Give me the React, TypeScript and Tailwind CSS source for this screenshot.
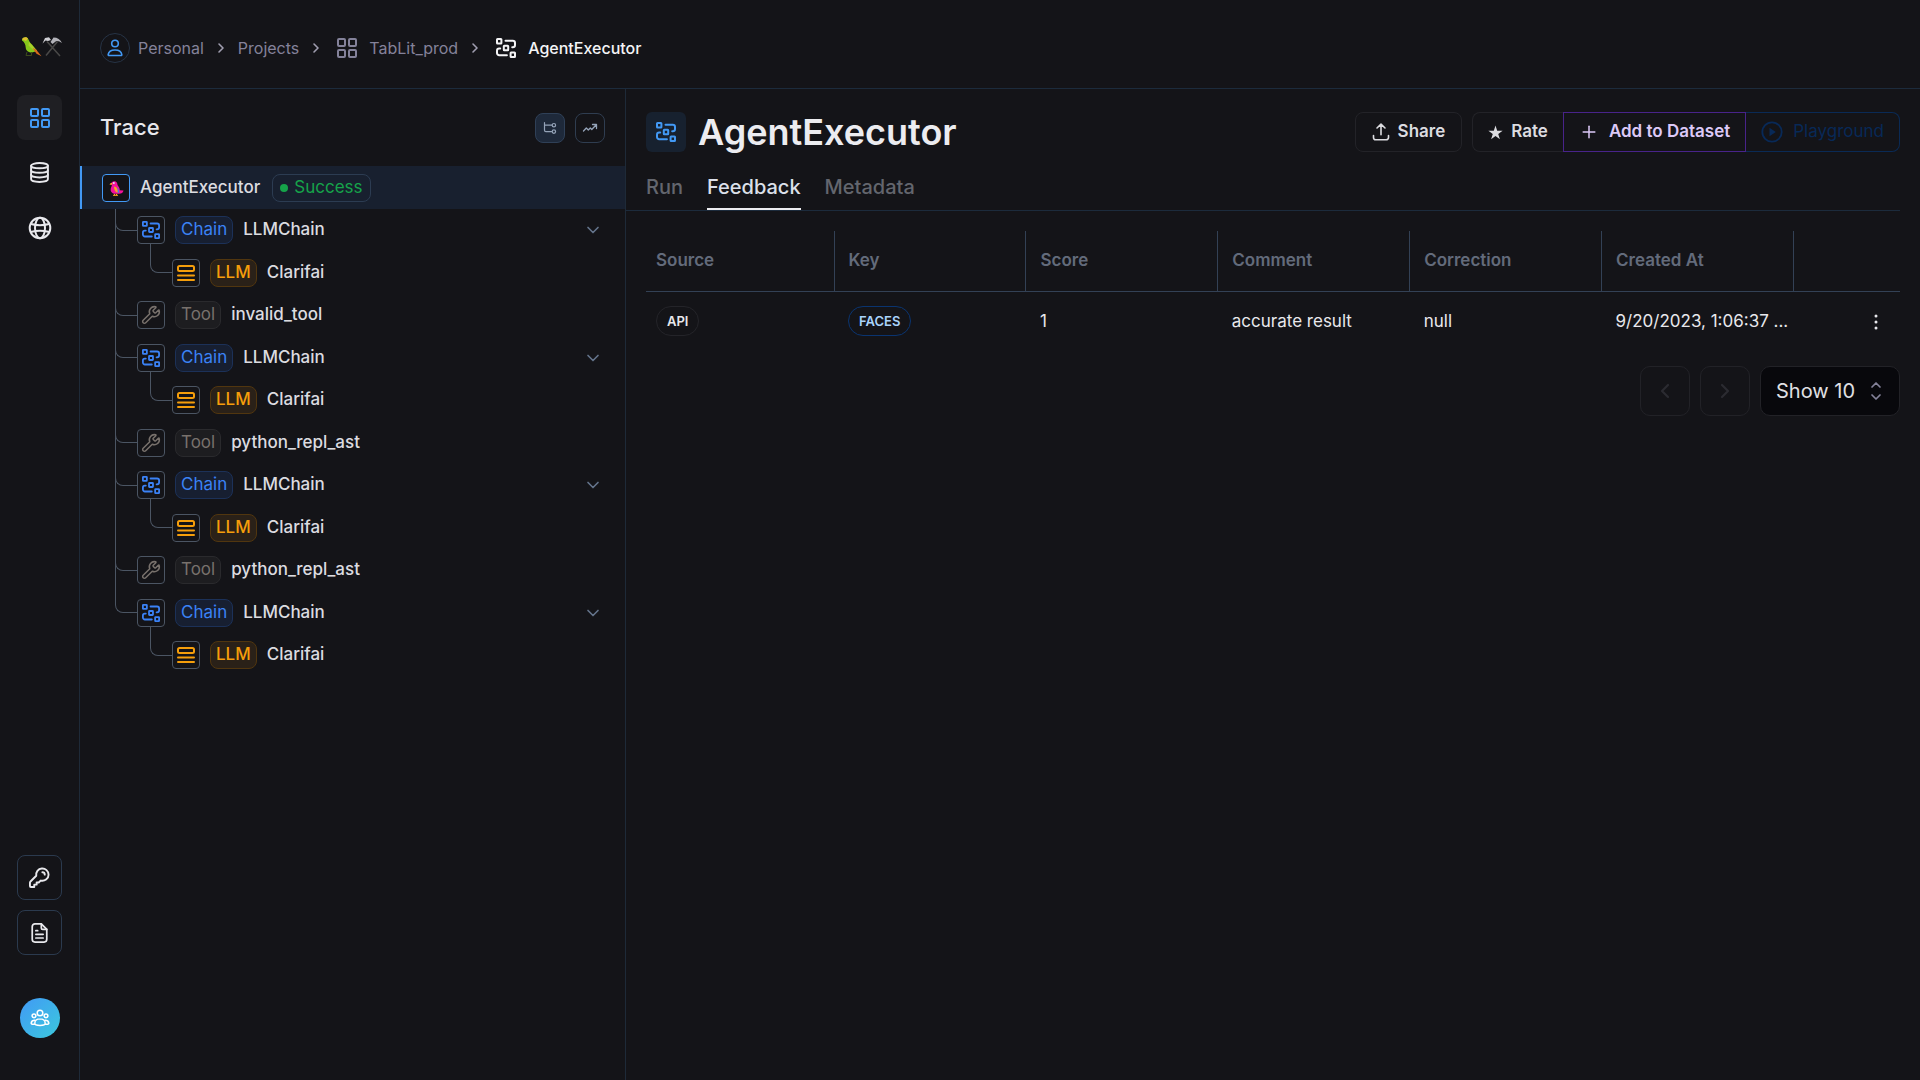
import { Fragment, type ReactNode } from "react";
import {
  ChevronDown,
  ChevronLeft,
  ChevronRight,
  ChevronUp,
  Plus,
  Wrench,
} from "lucide-react";

type IconProps = { className?: string };

function FlowIcon({ className }: IconProps) {
  return (
    <svg viewBox="0 0 20 20" fill="none" stroke="currentColor" strokeWidth="2" strokeLinecap="round" strokeLinejoin="round" className={className} aria-hidden="true">
      <rect x="1" y="1" width="4.4" height="4.4" rx="0.5" />
      <rect x="7.8" y="7.8" width="4.4" height="4.4" rx="0.5" />
      <rect x="14.6" y="14.6" width="4.4" height="4.4" rx="0.5" />
      <path d="M9.5 2.8h7.3A2.2 2.2 0 0 1 19 5v2a2.2 2.2 0 0 1-2.2 2.2h-.6" />
      <path d="M10.9 17.2H3.2A2.2 2.2 0 0 1 1 15v-2.2a2.2 2.2 0 0 1 2.2-2.2h1" />
    </svg>
  );
}

function GridIcon({ className }: IconProps) {
  return (
    <svg viewBox="0 0 20 20" fill="none" stroke="currentColor" strokeWidth="2" strokeLinejoin="round" className={className} aria-hidden="true">
      <rect x="1" y="1" width="7" height="7" rx="1" />
      <rect x="12" y="1" width="7" height="7" rx="1" />
      <rect x="1" y="12" width="7" height="7" rx="1" />
      <rect x="12" y="12" width="7" height="7" rx="1" />
    </svg>
  );
}

function LayersIcon({ className }: IconProps) {
  return (
    <svg viewBox="0 0 18 18" fill="none" stroke="currentColor" strokeWidth="2" strokeLinecap="round" className={className} aria-hidden="true">
      <rect x="1" y="2" width="16" height="5" rx="1.5" />
      <path d="M1 11.500h16M1 16h16" />
    </svg>
  );
}

function DatabaseIcon({ className }: IconProps) {
  return (
    <svg viewBox="0 0 20 20" fill="none" stroke="currentColor" strokeWidth="1.8" strokeLinecap="round" className={className} aria-hidden="true">
      <ellipse cx="10" cy="3.5" rx="8" ry="2.5" />
      <path d="M2 3.5v13C2 17.900 5.600 19 10 19s8-1.100 8-2.500v-13" />
      <path d="M2 7.800c0 1.400 3.600 2.500 8 2.500s8-1.100 8-2.500M2 12.200c0 1.400 3.600 2.500 8 2.500s8-1.100 8-2.500" />
    </svg>
  );
}

function GlobeIcon({ className }: IconProps) {
  return (
    <svg viewBox="0 0 24 24" fill="none" stroke="currentColor" strokeWidth="2" className={className} aria-hidden="true">
      <circle cx="12" cy="12" r="10.3" />
      <ellipse cx="12" cy="12" rx="5" ry="10.3" />
      <path d="M2.800 8c5 1.300 13.400 1.300 18.400 0M2.800 16c5-1.300 13.400-1.300 18.400 0" />
    </svg>
  );
}

function UserIcon({ className }: IconProps) {
  return (
    <svg viewBox="0 0 18 18" fill="none" stroke="currentColor" strokeWidth="1.6" strokeLinejoin="round" className={className} aria-hidden="true">
      <circle cx="9" cy="4.5" r="3.3" />
      <path d="M3 16.500c-.6 0-.9-.4-.8-1C2.600 12.800 5 11 9 11s6.400 1.800 6.800 4.500c.1.600-.2 1-.8 1z" />
    </svg>
  );
}

function KeyIcon({ className }: IconProps) {
  return (
    <svg viewBox="0 0 22 22" fill="none" stroke="currentColor" strokeWidth="2" strokeLinecap="round" strokeLinejoin="round" className={className} aria-hidden="true">
      <path d="M20.500 8a6.500 6.500 0 1 0-12.900 1.200L1.600 15.200c-.4.400-.6.900-.6 1.400V20c0 .6.400 1 1 1h3.500v-2.500H8v-2.300h2.200l2-2A6.500 6.500 0 0 0 20.500 8z" />
      <path d="M14 5.500c1.400 0 2.500 1.100 2.500 2.500" />
    </svg>
  );
}

function DocumentIcon({ className }: IconProps) {
  return (
    <svg viewBox="0 0 18 22" fill="none" stroke="currentColor" strokeWidth="1.9" strokeLinecap="round" strokeLinejoin="round" className={className} aria-hidden="true">
      <path d="M11 1H4a3 3 0 0 0-3 3v14a3 3 0 0 0 3 3h10a3 3 0 0 0 3-3V7z" />
      <path d="M11 1v4.500c0 .8.700 1.500 1.500 1.500H17M5 8.500h2M5 12.500h8M5 16.500h8" />
    </svg>
  );
}

function TeamIcon({ className }: IconProps) {
  return (
    <svg viewBox="0 0 20 20" fill="none" stroke="currentColor" strokeWidth="1.5" strokeLinecap="round" strokeLinejoin="round" className={className} aria-hidden="true">
      <circle cx="10" cy="5" r="2.8" />
      <circle cx="4" cy="7.8" r="1.9" />
      <circle cx="16" cy="7.8" r="1.9" />
      <path d="M10 10.800c-3.200 0-5.200 2-5.200 4.500 0 1.300 2 2.200 5.200 2.200s5.200-.9 5.200-2.200c0-2.500-2-4.500-5.200-4.500z" />
      <path d="M4.500 16.200H2.300c-.8 0-1.200-.5-1.100-1.200.3-1.600 1.600-2.700 3.600-2.700M15.500 16.200h2.200c.8 0 1.200-.5 1.100-1.200-.3-1.600-1.600-2.700-3.600-2.700" />
    </svg>
  );
}

function TreeIcon({ className }: IconProps) {
  return (
    <svg viewBox="0 0 14 14" fill="none" stroke="currentColor" strokeWidth="1.2" strokeLinecap="round" className={className} aria-hidden="true">
      <path d="M1.500 1.500v7.700c0 .9.500 1.400 1.400 1.400h5.800M1.500 4.200h7.200" />
      <circle cx="10.9" cy="4.2" r="1.7" />
      <circle cx="10.9" cy="10.6" r="1.7" />
    </svg>
  );
}

function TrendIcon({ className }: IconProps) {
  return (
    <svg viewBox="0 0 16 16" fill="none" stroke="currentColor" strokeWidth="1.3" strokeLinecap="round" strokeLinejoin="round" className={className} aria-hidden="true">
      <path d="M1.500 11l2.800-3 2 2 2-2 1.500 1.500L14.500 4.500M10.500 4.500h4v4" />
    </svg>
  );
}

function ShareIcon({ className }: IconProps) {
  return (
    <svg viewBox="0 0 18 18" fill="none" stroke="currentColor" strokeWidth="1.6" strokeLinecap="round" strokeLinejoin="round" className={className} aria-hidden="true">
      <path d="M5 5l4-3.800L13 5M9 1.500v10.300M1.500 12.500v2A2.300 2.300 0 0 0 3.800 16.800h10.400a2.300 2.300 0 0 0 2.300-2.300v-2" />
    </svg>
  );
}

function StarIcon({ className }: IconProps) {
  return (
    <svg viewBox="0 0 16 16" fill="currentColor" className={className} aria-hidden="true">
      <path d="M8 .5l1.800 5.600h5.800l-4.700 3.400 1.800 5.700L8 11.700l-4.700 3.500 1.800-5.700L.4 6.100h5.800z" />
    </svg>
  );
}

function PlayIcon({ className }: IconProps) {
  return (
    <svg viewBox="0 0 22 22" className={className} aria-hidden="true">
      <circle cx="11" cy="11" r="9.7" fill="none" stroke="currentColor" strokeWidth="1.8" />
      <path d="M8.500 6.800v8.400l6.300-4.200z" fill="currentColor" />
    </svg>
  );
}

function DotsIcon({ className }: IconProps) {
  return (
    <svg viewBox="0 0 4 16" fill="currentColor" className={className} aria-hidden="true">
      <circle cx="2" cy="2" r="1.5" />
      <circle cx="2" cy="8" r="1.5" />
      <circle cx="2" cy="14" r="1.5" />
    </svg>
  );
}

function BrandMark({ className }: IconProps) {
  return (
    <svg viewBox="0 0 42 22" className={className} aria-hidden="true">
      <path d="M1 3.500C2 1 6 .3 7.500 3.500c.8 2 1.300 3 3.500 5l5 6.500-5 1.500c-3.500 0-6-1.500-6.300-5C4.500 8.500 3.500 6 1 4.500z" fill="#86c81a" />
      <path d="M1 3.300C2 1 5.500.5 7 2.500L5 5z" fill="#e0bd30" />
      <path d="M8 6l8 8.500-2 1-6.500-6z" fill="#a9d12b" />
      <path d="M11.500 12l3.500 1.500 5.500 6.800-5-2.500z" fill="#d9681c" />
      <path d="M6 16l-1 3.500h5.500V16" fill="none" stroke="#3c4a1d" />
      <path d="M26 5.500l13 14.500M36.500 5.500L25 19.500" stroke="#4a4948" strokeWidth="1.5" />
      <path d="M21.500 7.500L24 2l4-.8L30 4l-3 1-2.500-.5z" fill="#d0d0d5" />
      <path d="M32.500 1.500c4 0 7 2 8.500 5.500-2.500-2-4.500-2.500-6-1.800L31.500 8l-2-2z" fill="#b2b2b8" />
    </svg>
  );
}

function ParrotIcon({ className }: IconProps) {
  return (
    <svg viewBox="0 0 16 16" className={className} aria-hidden="true">
      <path d="M3 4C3 1 8 0 9 2.800c.4 1 .3 2 1 3 1.300 1.700 1.800 3 1.800 4.500l3.700.2c-.5 2.300-2 3.300-4.300 3.300L6 13.800C2.500 12.700 2 9.500 3.300 7 4 5.700 4.200 5 3 4z" fill="#f4119c" />
      <path d="M1.500 4.500C2 3 3.500 2.500 4.500 3.300L3.500 5z" fill="#f7a823" />
      <circle cx="5.8" cy="2.900" r="1" fill="#dbe7f5" />
      <path d="M6 6.500c2.500 0 4.200 3 3.700 6.300C7.300 12 6 10 6 6.500z" fill="#f7a823" />
      <path d="M9 7c1.500 1.500 2.400 3.500 2.200 6l-1.600-.5C10 10.500 9.800 9 9 7z" fill="#3e7fe8" />
      <path d="M6.500 14v1.300M8.500 14v1.300M5 15.300h5" stroke="#f7a823" />
    </svg>
  );
}

type Kind = "Chain" | "LLM" | "Tool";
type Run = { kind: Kind; name: string; last?: boolean };

const runs: Run[] = [
  { kind: "Chain", name: "LLMChain" },
  { kind: "LLM", name: "Clarifai" },
  { kind: "Tool", name: "invalid_tool" },
  { kind: "Chain", name: "LLMChain" },
  { kind: "LLM", name: "Clarifai" },
  { kind: "Tool", name: "python_repl_ast" },
  { kind: "Chain", name: "LLMChain" },
  { kind: "LLM", name: "Clarifai" },
  { kind: "Tool", name: "python_repl_ast" },
  { kind: "Chain", name: "LLMChain", last: true },
  { kind: "LLM", name: "Clarifai", last: true },
];

const kindIcon: Record<Kind, ReactNode> = {
  Chain: <FlowIcon className="size-[18px] text-[#3b82f6]" />,
  LLM: <LayersIcon className="size-[18px] text-[#f59e0b]" />,
  Tool: <Wrench className="size-5 text-[#78716c]" strokeWidth={1.8} />,
};

const kindBadge: Record<Kind, string> = {
  Chain: "border-[#1c3158] bg-[#171f31] text-[#3b82f6]",
  LLM: "border-[#51360f] bg-[#2a2118] text-[#f59e0b]",
  Tool: "border-[#2a2a2d] bg-[#1d1d20] text-[#78716c]",
};

function TreeRow({ run, tall }: { run: Run; tall: boolean }) {
  const nested = run.kind === "LLM";
  return (
    <li className={`relative flex items-center pr-5 ${tall ? "h-[43px]" : "h-[42px]"} ${nested ? "pl-[92px]" : "pl-[57px]"}`}>
      {!run.last && <span className="absolute left-[35px] top-0 h-full border-l border-[#4b5563]" />}
      {nested ? (
        <span className="absolute -top-2 left-[70px] h-[30px] w-[22px] rounded-bl-lg border-b border-l border-[#4b5563]" />
      ) : (
        <span className="absolute left-[35px] top-0 h-[22px] w-[22px] rounded-bl-lg border-b border-l border-[#4b5563]" />
      )}
      <span className="flex size-7 items-center justify-center rounded border border-[#4b5563] bg-[#141418]">{kindIcon[run.kind]}</span>
      <span className={`ml-2.5 flex h-7 items-center rounded-lg border px-[5px] text-[17px] ${kindBadge[run.kind]} ${run.kind === "LLM" ? "font-medium" : ""}`}>
        {run.kind}
      </span>
      <a href="#run" className="ml-2.5 text-[17px] font-medium text-[#dcdce0]">{run.name}</a>
      {run.kind === "Chain" && (
        <button type="button" aria-label="Collapse" className="ml-auto flex size-6 items-center justify-center text-[#64748b]">
          <ChevronDown className="size-5" strokeWidth={2} />
        </button>
      )}
    </li>
  );
}

const columns = ["Source", "Key", "Score", "Comment", "Correction", "Created At"];

function Crumb({ icon, label, current }: { icon?: ReactNode; label: string; current?: boolean }) {
  return (
    <a href="#crumb" className={`flex items-center ${current ? "font-medium text-[#f4f4f6]" : "text-[#84829a]"}`}>
      {icon}
      {label}
    </a>
  );
}

export default function App() {
  const crumbs = [
    <Crumb
      key="personal"
      label="Personal"
      icon={
        <span className="mr-2 flex size-[30px] items-center justify-center rounded-full border border-[#263345] text-[#4299f5]">
          <UserIcon className="size-[18px]" />
        </span>
      }
    />,
    <Crumb key="projects" label="Projects" />,
    <Crumb key="tablit" label="TabLit_prod" icon={<GridIcon className="ml-1 mr-3 size-5" />} />,
    <Crumb key="agent" label="AgentExecutor" current icon={<FlowIcon className="ml-1 mr-3 size-5" />} />,
  ];

  return (
    <div className="flex min-h-screen bg-[#141418] font-['Inter',sans-serif] text-[#e8e8ec]">
      <nav aria-label="Main" className="flex w-20 shrink-0 flex-col items-center border-r border-[#1e2a38] pb-[42px] pt-9">
        <a href="#home" aria-label="Home" className="pl-1">
          <BrandMark className="h-[22px] w-[42px]" />
        </a>
        <div className="mt-[37px] flex flex-col gap-2.5">
          <a href="#projects" aria-label="Projects" className="flex size-[45px] items-center justify-center rounded-lg bg-[#1f1f23] text-[#4299f5]">
            <GridIcon className="size-5" />
          </a>
          <a href="#datasets" aria-label="Datasets" className="flex size-[45px] items-center justify-center">
            <DatabaseIcon className="size-[21px]" />
          </a>
          <a href="#hub" aria-label="Hub" className="flex size-[45px] items-center justify-center">
            <GlobeIcon className="size-6" />
          </a>
        </div>
        <div className="mt-auto flex flex-col gap-2.5">
          <a href="#keys" aria-label="API keys" className="flex size-[45px] items-center justify-center rounded-lg border border-[#2b3a4e]">
            <KeyIcon className="size-[21px]" />
          </a>
          <a href="#docs" aria-label="Documentation" className="flex size-[45px] items-center justify-center rounded-lg border border-[#2b3a4e]">
            <DocumentIcon className="h-5 w-[17px]" />
          </a>
        </div>
        <button type="button" aria-label="Organization" className="mt-[43px] flex size-10 items-center justify-center rounded-full bg-linear-to-br from-[#4299f5] to-[#3cc8dc] text-white">
          <TeamIcon className="size-5" />
        </button>
      </nav>

      <div className="flex min-w-0 flex-1 flex-col">
        <header className="flex h-[89px] items-center border-b border-[#1c2b3c] px-5 pt-2 text-base">
          {crumbs.map((crumb, i) => (
            <Fragment key={i}>
              {i > 0 && <ChevronRight className="mx-[9px] size-4 shrink-0 text-[#a09eb0]" strokeWidth={2.4} />}
              {crumb}
            </Fragment>
          ))}
        </header>

        <div className="flex flex-1">
          <section aria-label="Trace" className="w-[546px] shrink-0 border-r border-[#1e2a38]">
            <div className="flex h-[77px] items-center gap-2.5 px-5">
              <h2 className="mr-auto text-[22px] font-medium">Trace</h2>
              <button type="button" aria-label="Tree view" className="flex size-[30px] items-center justify-center rounded-lg border border-[#2f4057] bg-[#1e293a] text-[#94a3b8]">
                <TreeIcon className="size-3.5" />
              </button>
              <button type="button" aria-label="Latency view" className="flex size-[30px] items-center justify-center rounded-lg border border-[#2f3d50] text-[#94a3b8]">
                <TrendIcon className="size-4" />
              </button>
            </div>
            <ul>
              <li className="flex h-[43px] items-center border-l-2 border-[#4299f5] bg-[#18202f] pl-5">
                <span className="flex size-7 items-center justify-center rounded border border-[#4299f5] bg-[#141418]">
                  <ParrotIcon className="size-4" />
                </span>
                <a href="#run" className="ml-2.5 text-[17px] font-medium text-[#dcdce0]">AgentExecutor</a>
                <span className="ml-3 flex h-7 items-center rounded-lg border border-[#2c3c52] px-[7px] text-[17px] text-[#16a34a]">
                  <span className="mr-1.5 size-2 rounded-full bg-[#16a34a]" />
                  Success
                </span>
              </li>
              {runs.map((run, i) => (
                <TreeRow key={i} run={run} tall={i % 2 === 1} />
              ))}
            </ul>
          </section>

          <main className="min-w-0 flex-1 pr-5 pt-[23px]">
            <div className="flex items-center pl-5">
              <span className="flex size-10 items-center justify-center rounded-md bg-[#17212f] text-[#4299f5]">
                <FlowIcon className="size-5" />
              </span>
              <h1 className="ml-3 text-[36px] font-semibold leading-10 text-[#ececf0]">AgentExecutor</h1>
              <div className="ml-auto flex gap-2.5 text-[17px] font-semibold text-[#dcdce0]">
                <button type="button" className="flex h-10 items-center gap-2 rounded-lg border border-[#232328] px-4">
                  <ShareIcon className="size-[18px]" />
                  Share
                </button>
                <div className="flex">
                  <button type="button" className="flex h-10 items-center gap-2 rounded-l-lg border border-r-0 border-[#232328] px-[15px]">
                    <StarIcon className="size-[15px]" />
                    Rate
                  </button>
                  <button type="button" className="flex h-10 items-center gap-2.5 border border-[#48238a] px-[15px] text-[#dcc9f7]">
                    <Plus className="size-5" strokeWidth={1.8} />
                    Add to Dataset
                  </button>
                  <button type="button" disabled className="flex h-10 items-center gap-2.5 rounded-r-lg border border-l-0 border-[#0a2a55] px-[15px] font-normal text-[#082957]">
                    <PlayIcon className="size-[22px]" />
                    Playground
                  </button>
                </div>
              </div>
            </div>

            <div role="tablist" className="mt-3.5 flex gap-6 border-b border-[#1c2b3c] pl-5 text-xl font-medium text-[#63666e]">
              <button type="button" role="tab" aria-selected="false" className="h-11 border-b-2 border-transparent">Run</button>
              <button type="button" role="tab" aria-selected="true" className="h-11 border-b-2 border-[#ececf0] text-[#dce0ea]">Feedback</button>
              <button type="button" role="tab" aria-selected="false" className="h-11 border-b-2 border-transparent">Metadata</button>
            </div>

            <div className="pl-5 pt-5">
              <table className="w-full table-fixed border-collapse text-left text-[17px]">
                <colgroup>
                  <col className="w-[15%]" />
                  {columns.slice(1).map((c) => (
                    <col key={c} className="w-[15.3%]" />
                  ))}
                  <col />
                </colgroup>
                <thead>
                  <tr className="h-[60px] border-b border-[#334155] text-[#636b7b]">
                    {columns.map((c) => (
                      <th key={c} scope="col" className="border-r border-[#334155] pl-3.5 font-semibold first:pl-2.5">{c}</th>
                    ))}
                    <th scope="col" aria-label="Actions" />
                  </tr>
                </thead>
                <tbody>
                  <tr className="h-[60px]">
                    <td className="pl-2.5">
                      <span className="inline-flex h-[30px] items-center rounded-full border border-[#242429] px-2.5 align-middle text-[13px] font-semibold">API</span>
                    </td>
                    <td className="pl-3.5">
                      <span className="inline-flex h-[30px] items-center rounded-full border border-[#0a3470] px-2.5 align-middle text-[13px] font-semibold text-[#a9d3fb]">FACES</span>
                    </td>
                    <td className="pl-3.5">1</td>
                    <td className="pl-3.5">accurate result</td>
                    <td className="pl-3.5">null</td>
                    <td className="whitespace-nowrap pl-3.5">9/20/2023, 1:06:37 ...</td>
                    <td className="pr-3 text-right">
                      <button type="button" aria-label="Row actions" className="inline-flex size-6 items-center justify-center align-middle">
                        <DotsIcon className="h-4 w-1" />
                      </button>
                    </td>
                  </tr>
                </tbody>
              </table>

              <div className="mt-[15px] flex justify-end gap-2.5">
                <button type="button" disabled aria-label="Previous page" className="flex size-[50px] items-center justify-center rounded-[10px] border border-[#222227] text-[#2b2b31]">
                  <ChevronLeft className="size-6" strokeWidth={2.2} />
                </button>
                <button type="button" disabled aria-label="Next page" className="flex size-[50px] items-center justify-center rounded-[10px] border border-[#222227] text-[#2b2b31]">
                  <ChevronRight className="size-6" strokeWidth={2.2} />
                </button>
                <div className="relative">
                  <select aria-label="Rows per page" defaultValue="10" className="h-[50px] w-[140px] appearance-none rounded-[10px] border border-[#222227] bg-[#08080c] pl-[15px] text-xl text-[#e0e0e4]">
                    <option value="10">Show 10</option>
                    <option value="20">Show 20</option>
                  </select>
                  <span className="pointer-events-none absolute right-4 top-0 flex h-full flex-col items-center justify-center text-[#84829a]">
                    <ChevronUp className="-mb-1 size-4" strokeWidth={2.6} />
                    <ChevronDown className="size-4" strokeWidth={2.6} />
                  </span>
                </div>
              </div>
            </div>
          </main>
        </div>
      </div>
    </div>
  );
}
